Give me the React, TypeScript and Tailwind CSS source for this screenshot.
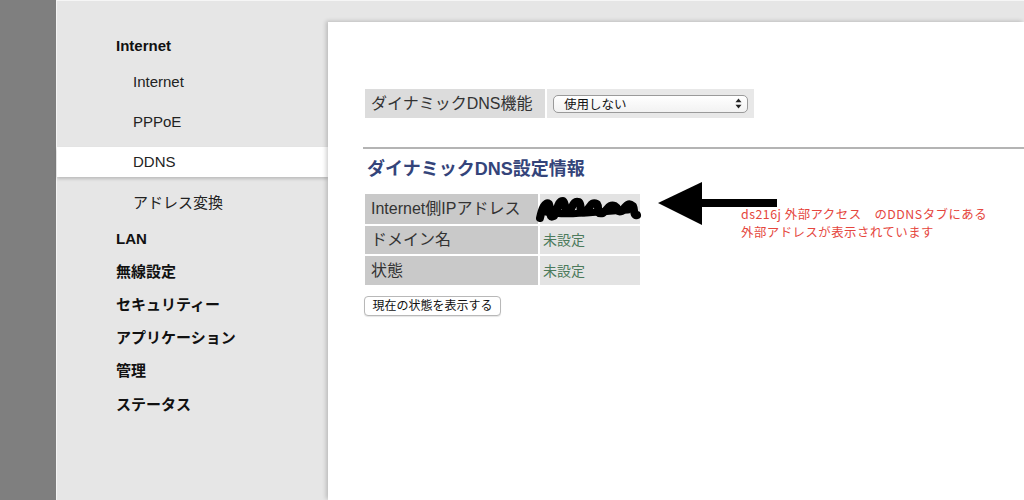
import React from "react";

const font = { fontFamily: '"Liberation Sans", "Noto Sans CJK JP", sans-serif' };

function SideHead({ children, className = "" }: { children: React.ReactNode; className?: string }) {
  return (
    <div className={`h-[20px] flex items-center pl-[59px] text-[15px] font-bold text-[#111] ${className}`}>{children}</div>
  );
}

function SideSub({ children, active = false, className = "" }: { children: React.ReactNode; active?: boolean; className?: string }) {
  return (
    <div
      className={`h-[30px] flex items-center pl-[76px] text-[15px] text-[#222] ${
        active ? "bg-white shadow-[0_2px_3px_rgba(0,0,0,0.18)]" : ""
      } ${className}`}
    >
      {children}
    </div>
  );
}

export default function App() {
  return (
    <div className="w-[1024px] h-[500px] flex overflow-hidden bg-[#e6e6e6]" style={font}>
      <div className="w-[57px] shrink-0 h-full bg-[#7f7f7f] border-r border-[#f4f4f4]" />
      <div className="flex-1 flex flex-col">
        <div className="h-[22px] shrink-0 border-t border-[#f6f6f6]" />
        <div className="flex-1 flex">
          {/* Sidebar */}
          <div className="w-[271px] shrink-0 flex flex-col pt-[14px]">
            <SideHead>Internet</SideHead>
            <SideSub className="mt-[11px]">Internet</SideSub>
            <SideSub className="mt-[10px]">PPPoE</SideSub>
            <SideSub className="mt-[10px]" active>DDNS</SideSub>
            <SideSub className="mt-[11px]">アドレス変換</SideSub>
            <SideHead className="mt-[11px]">LAN</SideHead>
            <SideHead className="mt-[13px]">無線設定</SideHead>
            <SideHead className="mt-[13px]">セキュリティー</SideHead>
            <SideHead className="mt-[13px]">アプリケーション</SideHead>
            <SideHead className="mt-[13px]">管理</SideHead>
            <SideHead className="mt-[14px]">ステータス</SideHead>
          </div>
          {/* Content */}
          <div className="flex-1 bg-white shadow-[-2px_-1px_4px_rgba(0,0,0,0.18)] pt-[67px] pl-[37px] relative">
            <div className="flex gap-[2px]">
              <div className="w-[180px] h-[29px] bg-[#dcdcdc] flex items-center pl-[6px] text-[16px] text-[#333]">
                ダイナミックDNS機能
              </div>
              <div className="w-[207px] h-[29px] bg-[#e8e8e8] flex items-center px-[6px]">
                <div className="w-[195px] h-[18px] rounded-[5px] border border-[#9a9a9a] bg-gradient-to-b from-white to-[#f2f2f2] flex items-center justify-between pl-[10px] pr-[5px]">
                  <span className="text-[12.5px] text-[#111] mt-[4px]">使用しない</span>
                  <svg width="7" height="11" viewBox="0 0 7 11">
                    <path d="M3.5 0.5 L6.5 4.3 H0.5 Z" fill="#222" />
                    <path d="M3.5 10.5 L6.5 6.7 H0.5 Z" fill="#222" />
                  </svg>
                </div>
              </div>
            </div>
            <div className="mt-[29px] -ml-[2px] h-[2px] bg-[#b4b4b4]" />
            <div className="mt-[9px] ml-[2px] text-[18px] font-bold text-[#34447a] leading-[22px]">
              ダイナミックDNS設定情報
            </div>
            <div className="mt-[14px] flex flex-col gap-[2px] w-[275px]">
              <div className="flex gap-[2px] h-[30px]">
                <div className="w-[173px] bg-[#c9c9c9] flex items-center pl-[6px] text-[16px] text-[#333]">
                  Internet側IPアドレス
                </div>
                <div className="flex-1 bg-[#e3e3e3] relative overflow-visible">
                  <svg className="absolute -left-[4px] top-[1px]" width="106" height="28" viewBox="0 0 106 28">
                    <path
                      d="M4 23 C6 14 9 6 13 9 C16 16 12 24 18 21 C22 16 21 6 27 6 C31 9 27 19 33 17 C37 12 37 5 43 7 C47 11 41 19 49 17 C55 12 55 6 61 9 C64 13 59 20 67 18 C72 14 73 9 79 11 C83 13 80 18 86 16 C90 11 92 7 97 11 C99 15 97 21 101 20"
                      stroke="#000"
                      strokeWidth="8"
                      fill="none"
                      strokeLinecap="round"
                      strokeLinejoin="round"
                    />
                    <path d="M10 17 C30 21 60 17 92 15" stroke="#000" strokeWidth="7" fill="none" strokeLinecap="round" />
                  </svg>
                </div>
              </div>
              <div className="flex gap-[2px] h-[28px]">
                <div className="w-[173px] bg-[#c9c9c9] flex items-center pl-[6px] text-[16px] text-[#333]">ドメイン名</div>
                <div className="flex-1 bg-[#e3e3e3] flex items-center pl-[3px] text-[14px] text-[#4c7a5b]">未設定</div>
              </div>
              <div className="flex gap-[2px] h-[29px]">
                <div className="w-[173px] bg-[#c9c9c9] flex items-center pl-[6px] text-[16px] text-[#333]">状態</div>
                <div className="flex-1 bg-[#e3e3e3] flex items-center pl-[3px] pt-[2px] text-[14px] text-[#4c7a5b]">未設定</div>
              </div>
            </div>
            <button className="mt-[11px] -ml-[1px] h-[20px] w-[137px] rounded-[4px] border border-[#b8b8b8] bg-white text-[12px] text-[#111] flex items-center justify-center shadow-[0_1px_1px_rgba(0,0,0,0.1)]">
              現在の状態を表示する
            </button>

            {/* Annotation arrow */}
            <svg className="absolute left-[329px] top-[160px]" width="122" height="46" viewBox="0 0 122 46">
              <path d="M1 21 L45 0 L45 43 Z" fill="#000" />
              <rect x="43" y="17" width="77" height="8" fill="#000" />
            </svg>
            <div
              className="absolute left-[413px] top-[183px] text-[12.4px] leading-[18px] tracking-[0.5px] text-[#e5463d]"
              style={{ fontFamily: '"Noto Sans CJK JP", sans-serif' }}
            >
              <div>ds216j 外部アクセス　のDDNSタブにある</div>
              <div>外部アドレスが表示されています</div>
            </div>
          </div>
        </div>
      </div>
    </div>
  );
}
